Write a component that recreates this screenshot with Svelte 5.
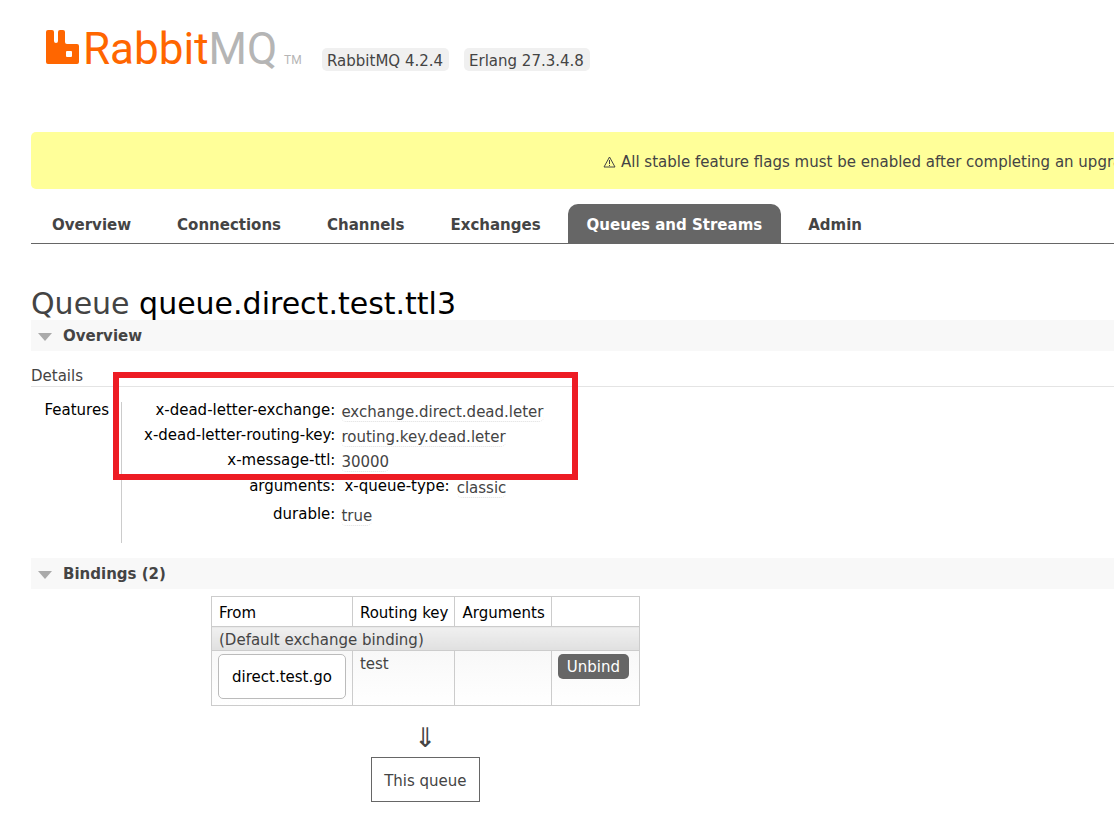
<script lang="ts">
  const tabs = ["Overview", "Connections", "Channels", "Exchanges", "Queues and Streams", "Admin"];
  const selectedTab = "Queues and Streams";

  const queueArguments = [
    { key: "x-dead-letter-exchange", value: "exchange.direct.dead.leter" },
    { key: "x-dead-letter-routing-key", value: "routing.key.dead.leter" },
    { key: "x-message-ttl", value: "30000" },
  ];

  const bindings = [{ from: "direct.test.go", routingKey: "test" }];

  let overviewOpen = $state(true);
  let bindingsOpen = $state(true);
</script>

<div class="page">
  <header>
    <a class="logo" href="#/" aria-label="RabbitMQ">
      <svg width="258" height="56" viewBox="0 0 258 56">
        <path
          fill="#ff6600"
          fill-rule="evenodd"
          d="M2 5H6Q8 5 8 7V16Q8 18 10 18H10Q12 18 12 16V7Q12 5 14 5H17Q19 5 19 7V17Q19 19 21 19H31Q33 19 33 21V37Q33 39 31 39H2Q0 39 0 37V7Q0 5 2 5ZM21 26Q20 26 20 27V31Q20 32 21 32H25Q26 32 26 31V27Q26 26 25 26Z"
        />
        <text x="37" y="39" class="logo-name">Rabbit<tspan fill="#b5b5b5">MQ</tspan></text>
        <text x="238" y="39" class="logo-tm">TM</text>
      </svg>
    </a>
    <span class="version">RabbitMQ 4.2.4</span>
    <span class="version">Erlang 27.3.4.8</span>
  </header>

  <div class="warning">
    <svg width="13" height="12" viewBox="0 0 13 12" fill="none" stroke="#444">
      <path d="M6.5 1L12 11H1Z" />
      <path d="M6.5 4V8M6.5 9V10" />
    </svg>
    <span>All stable feature flags must be enabled after completing an upgrade.</span>
  </div>

  <nav>
    {#each tabs as tab (tab)}
      <a href="#/{tab.toLowerCase()}" class:selected={tab === selectedTab}>{tab}</a>
    {/each}
  </nav>

  <h1>Queue <b>queue.direct.test.ttl3</b></h1>

  <section>
    <h2>
      <button class="toggle" class:closed={!overviewOpen} onclick={() => (overviewOpen = !overviewOpen)}>
        Overview
      </button>
    </h2>
    {#if overviewOpen}
      <div class="details">
        <h3>Details</h3>
        <table class="facts">
          <tbody>
            <tr>
              <th>Features</th>
              <td class="features">
                <table class="mini">
                  <tbody>
                    {#each queueArguments as arg (arg.key)}
                      <tr>
                        <th>{arg.key}:</th>
                        <td><abbr>{arg.value}</abbr></td>
                      </tr>
                    {/each}
                    <tr class="nested">
                      <th>arguments:</th>
                      <td>
                        <table class="mini">
                          <tbody>
                            <tr>
                              <th>x-queue-type:</th>
                              <td><abbr>classic</abbr></td>
                            </tr>
                          </tbody>
                        </table>
                      </td>
                    </tr>
                    <tr>
                      <th>durable:</th>
                      <td><abbr>true</abbr></td>
                    </tr>
                  </tbody>
                </table>
              </td>
            </tr>
          </tbody>
        </table>
        <div class="highlight"></div>
      </div>
    {/if}
  </section>

  <section>
    <h2>
      <button class="toggle" class:closed={!bindingsOpen} onclick={() => (bindingsOpen = !bindingsOpen)}>
        Bindings (2)
      </button>
    </h2>
    {#if bindingsOpen}
      <div class="bindings">
        <table class="list">
          <thead>
            <tr>
              <th>From</th>
              <th>Routing key</th>
              <th>Arguments</th>
              <th class="actions"></th>
            </tr>
          </thead>
          <tbody>
            <tr class="default-binding">
              <td colspan="4">(Default exchange binding)</td>
            </tr>
            {#each bindings as binding (binding.from)}
              <tr class="binding">
                <td><a class="exchange" href="#/exchanges/{binding.from}">{binding.from}</a></td>
                <td>{binding.routingKey}</td>
                <td></td>
                <td><button class="unbind">Unbind</button></td>
              </tr>
            {/each}
          </tbody>
        </table>
        <p class="arrow">⇓</p>
        <span class="queue">This queue</span>
      </div>
    {/if}
  </section>
</div>

<style>
  :global(body) {
    margin: 0;
    background: #fff;
  }

  .page {
    padding: 25px 0 15px 31px;
    overflow: hidden;
    color: #444;
    font: 15px/20px Verdana, "DejaVu Sans", sans-serif;
  }

  header {
    display: flex;
    align-items: flex-start;
    height: 107px;
    padding-left: 15px;
  }

  .logo {
    margin-right: 18px;
  }

  .logo svg {
    display: block;
    overflow: visible;
  }

  .logo-name {
    font-family: Roboto, sans-serif;
    font-size: 44px;
    fill: #ff6600;
  }

  .logo-tm {
    font-family: Roboto, sans-serif;
    font-size: 12px;
    fill: #b5b5b5;
  }

  .version {
    margin: 23px 15px 0 0;
    padding: 3px 6px 0 5px;
    border-radius: 5px;
    background: #f0f0f0;
    white-space: nowrap;
  }

  .warning {
    display: flex;
    align-items: center;
    gap: 5px;
    height: 55px;
    padding: 2px 0 0 572px;
    border-radius: 5px 0 0 5px;
    background: #ffff99;
    white-space: nowrap;
    overflow: hidden;
  }

  .warning svg {
    flex: none;
  }

  nav {
    display: flex;
    gap: 8px;
    margin-top: 15px;
    padding-left: 2px;
    border-bottom: 1px solid #666;
  }

  nav a {
    padding: 11px 19px 8px;
    border-radius: 10px 10px 0 0;
    color: #444;
    font-weight: bold;
    text-decoration: none;
    white-space: nowrap;
  }

  nav a.selected {
    background: #666;
    color: #fff;
  }

  h1 {
    margin: 43px 0 0;
    font-size: 30px;
    font-weight: normal;
    line-height: 33px;
  }

  h1 b {
    color: #000;
    font-weight: normal;
  }

  h2 {
    margin: 0;
    font-size: 15px;
  }

  .toggle {
    display: flex;
    align-items: center;
    gap: 11px;
    width: 100%;
    padding: 6px 7px 4px;
    border: 0;
    background: #f8f8f8;
    color: #444;
    font: bold 15px/21px Verdana, "DejaVu Sans", sans-serif;
    cursor: pointer;
  }

  .toggle::before {
    content: "";
    border: 7px solid transparent;
    border-top: 8px solid #aaa;
    border-bottom: 0;
  }

  .toggle.closed::before {
    rotate: -90deg;
  }

  .details {
    position: relative;
    padding: 15px 0;
  }

  h3 {
    margin: 0 0 15px;
    border-bottom: 1px solid #e4e4e4;
    font-size: 15px;
    font-weight: normal;
  }

  .facts,
  .mini,
  .list {
    border-collapse: collapse;
  }

  .facts th,
  .facts td {
    padding: 0;
    vertical-align: top;
  }

  .facts th {
    color: #000;
    font-weight: normal;
    text-align: right;
    white-space: nowrap;
  }

  .facts > tbody > tr > th {
    width: 78px;
    padding: 0 12px 0 0;
    line-height: 16px;
  }

  .facts .features {
    padding: 0 0 12px 22px;
    border-left: 1px solid #ccc;
  }

  .mini th {
    padding: 0 6px 9px 0;
    line-height: 16px;
  }

  .mini td {
    padding-top: 1px;
    line-height: 18px;
  }

  .mini .nested > th {
    padding-top: 1px;
  }

  .nested .mini th {
    padding: 0 7px 12px 3px;
  }

  .mini .nested > td {
    padding-top: 1px;
  }

  abbr {
    border-bottom: 1px dotted #ddd;
    border-radius: 5px;
  }

  .highlight {
    position: absolute;
    top: 21px;
    left: 82px;
    width: 453px;
    height: 96px;
    border: 6px solid #ed1c24;
    pointer-events: none;
  }

  .bindings {
    display: flex;
    flex-direction: column;
    align-items: center;
    width: fit-content;
    margin: 7px 0 0 180px;
  }

  .list th,
  .list td {
    padding: 3px 6px 6px 7px;
    border: 1px solid #ccc;
    text-align: left;
    vertical-align: top;
    white-space: nowrap;
  }

  .list th {
    padding: 6px 6px 3px 7px;
    color: #000;
    font-weight: normal;
  }

  .list .actions {
    width: 74px;
  }

  .list .default-binding td {
    padding-top: 3px;
    padding-bottom: 0;
    background: linear-gradient(#f0f0f0, #e0e0e0);
  }

  .binding {
    background: linear-gradient(#f8f8f8, #fff);
  }

  .exchange {
    display: block;
    margin-left: -1px;
    padding: 12px 13px 11px;
    border: 1px solid #bbb;
    border-radius: 5px;
    background: #fff;
    color: #000;
    text-decoration: none;
  }

  .unbind {
    display: block;
    margin-left: -1px;
    padding: 3px 9px 2px;
    border: 0;
    border-radius: 5px;
    background: #666;
    color: #fff;
    font: 15px/20px Verdana, "DejaVu Sans", sans-serif;
    cursor: pointer;
  }

  .arrow {
    margin: 17px 0 4px;
    font-size: 27px;
    line-height: 30px;
  }

  .queue {
    padding: 14px 12px 10px;
    border: 1px solid #666;
    line-height: 19px;
  }
</style>
